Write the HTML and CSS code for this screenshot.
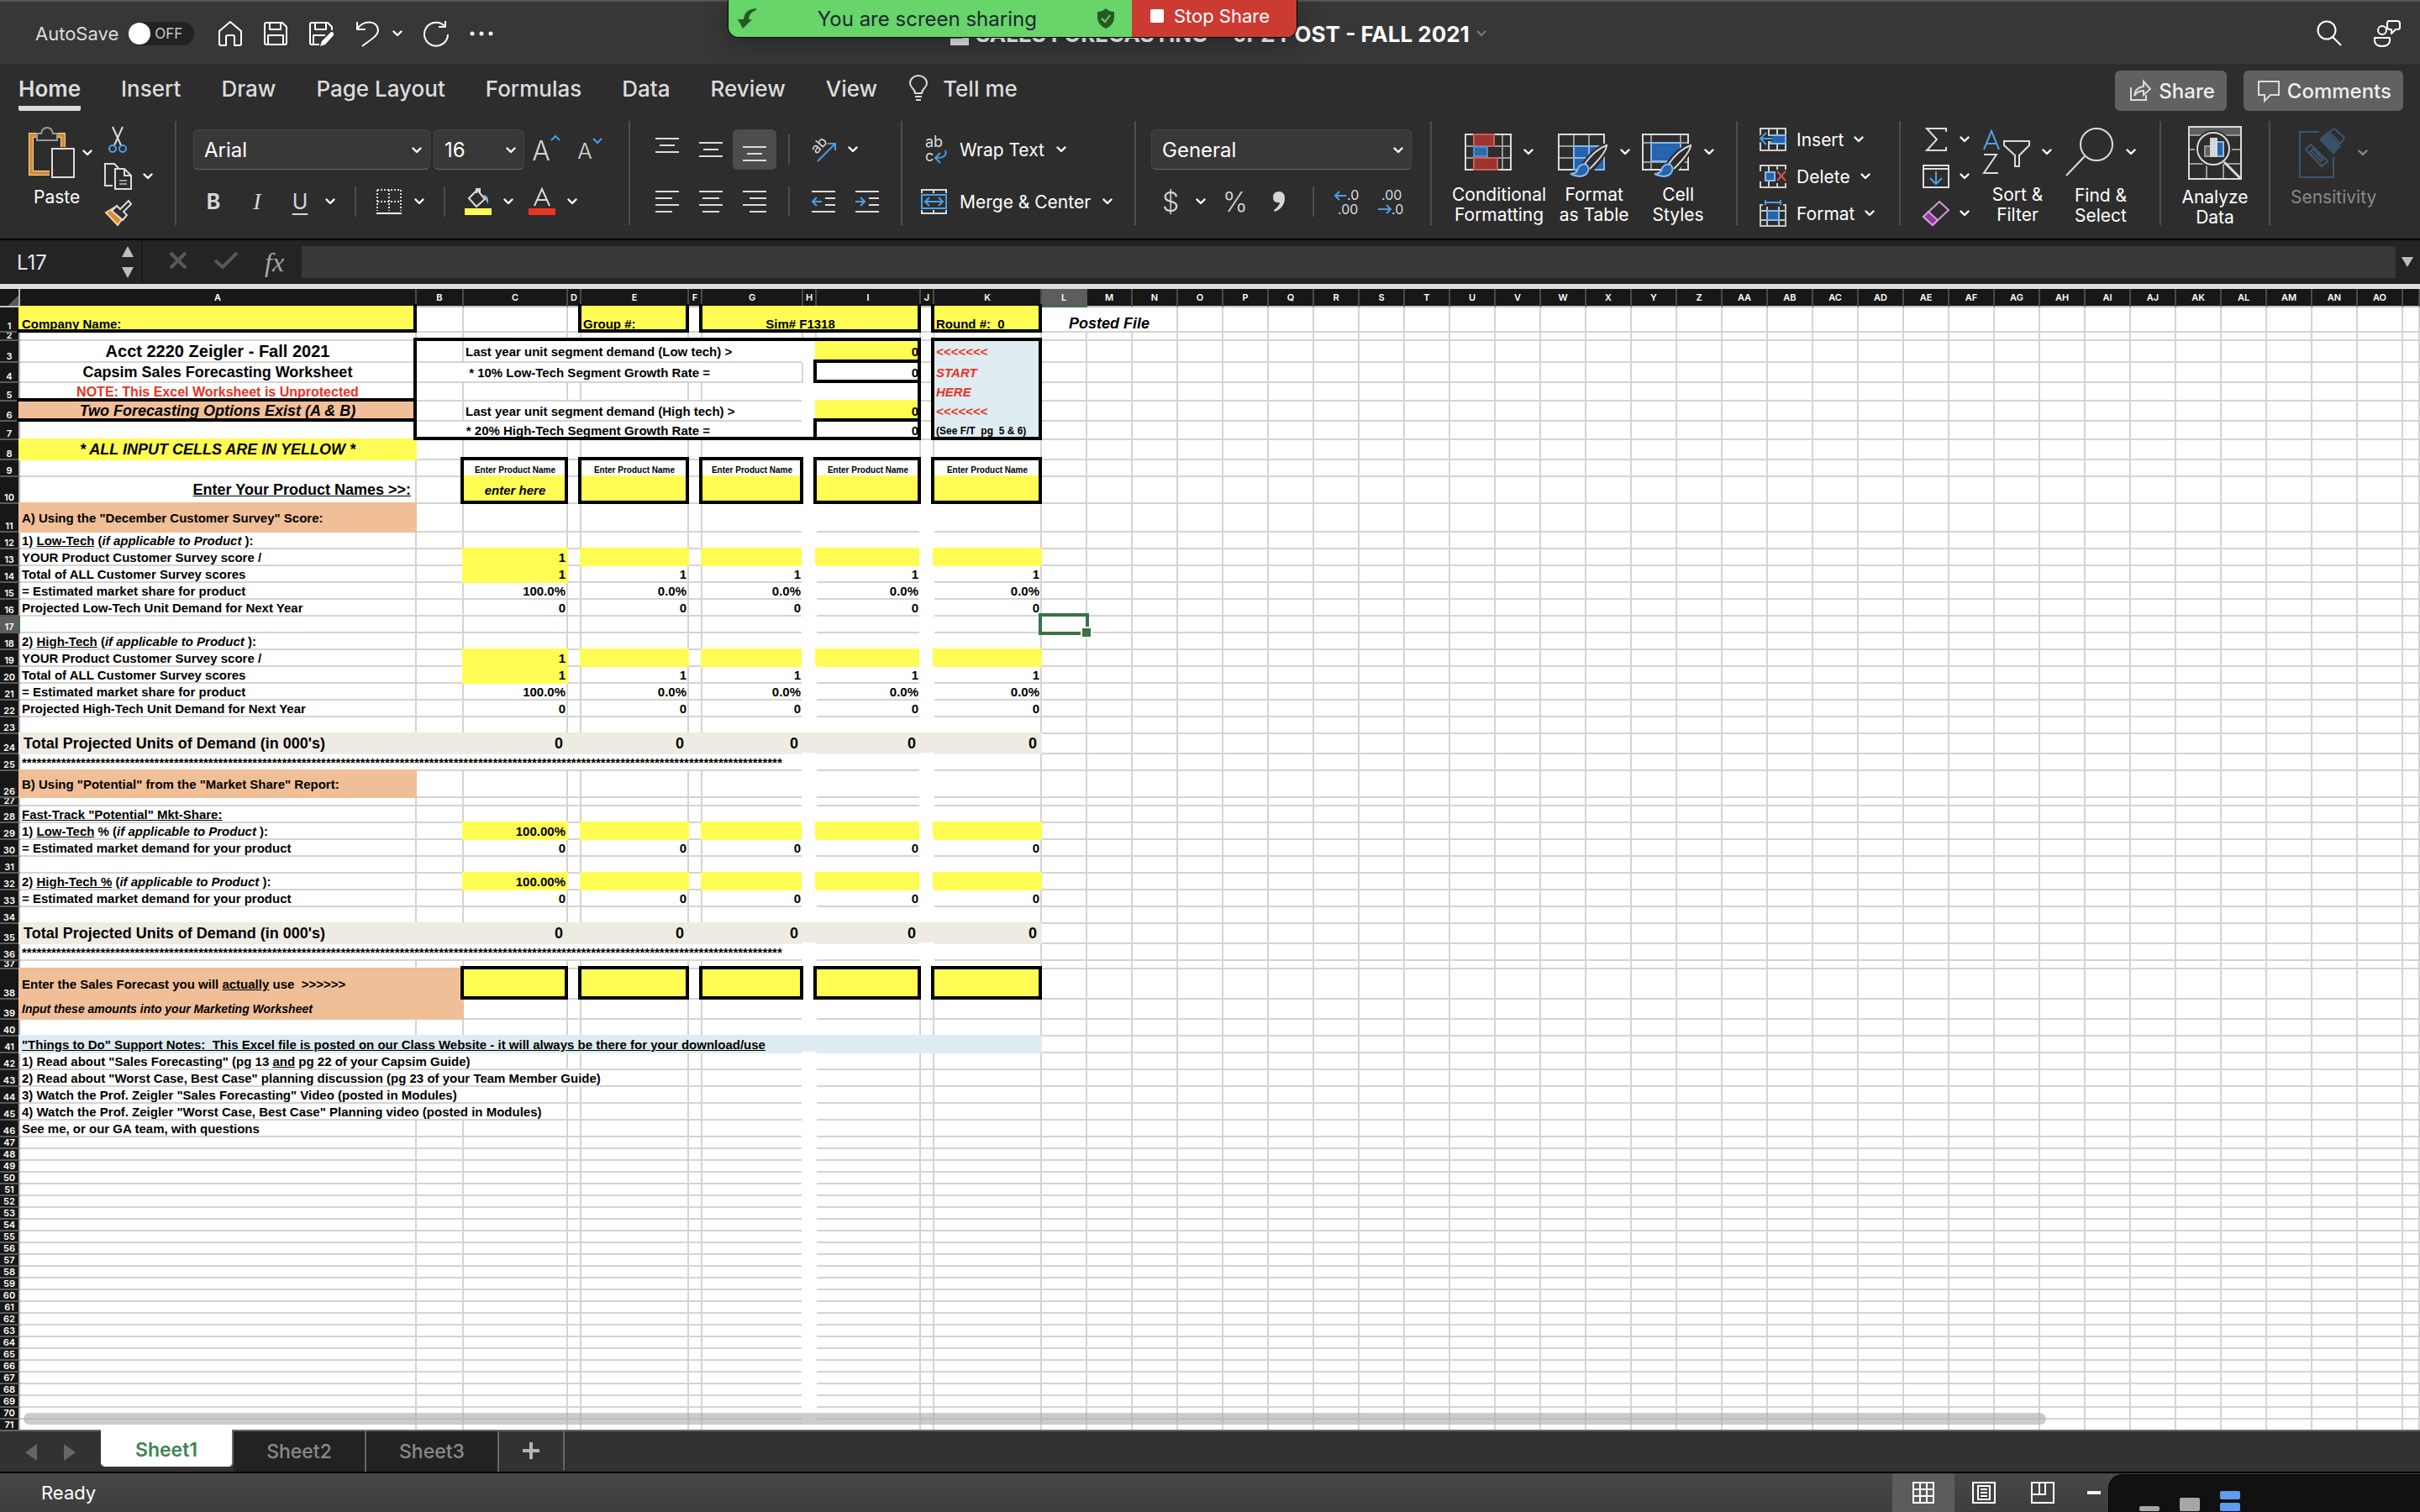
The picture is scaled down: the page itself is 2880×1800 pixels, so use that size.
FILE: index.html
```html
<!DOCTYPE html>
<html lang="en">
<head>
<meta charset="UTF-8">
<meta name="viewport" content="width=device-width, initial-scale=1.0">
<title>SALES FORECASTING - JPZ POST - FALL 2021</title>
<link rel="stylesheet" href="styles.css">
</head>
<body>

<svg class="defs" aria-hidden="true">
  <symbol id="chev" viewBox="0 0 12 8"><path d="M1.5 1.5 L6 6 L10.500 1.5" fill="none" stroke="currentColor" stroke-width="2.400" stroke-linecap="round" stroke-linejoin="round"/></symbol>
  <symbol id="brush" viewBox="0 0 46 42"><path d="M17 25 Q30 6 44 2 Q44 10 25 32 Z" fill="#2d2d2d" stroke="#2d2d2d" stroke-width="6"/><path d="M1 36 Q9 36 10 29 Q14 23 20 25 Q25 30 20 36 Q13 42 1 36 Z" fill="#2564ae" stroke="#8ab8ea" stroke-width="2"/><path d="M18 24 Q30 7 44 2 Q44 10 24 30" fill="none" stroke="#d6d6d6" stroke-width="2"/></symbol>
</svg>

<header class="titlebar">
  <div class="title-left">
    <label class="autosave" for="autosave">AutoSave</label>
    <span class="switch"><input type="checkbox" id="autosave"><span class="knob"></span><span class="off">OFF</span></span>
    <button class="tb" aria-label="Home"><svg width="30" height="32" viewBox="0 0 30 32"><path d="M2 13 L15 2 L28 13 V28 Q28 30 26 30 H20 V20 Q20 18 18 18 H12 Q10 18 10 20 V30 H4 Q2 30 2 28 Z"/></svg></button>
    <button class="tb" aria-label="Save"><svg width="30" height="32" viewBox="0 0 30 32"><path d="M4 3 H23 L28 8 V27 Q28 29 26 29 H4 Q2 29 2 27 V5 Q2 3 4 3 Z M8 3 V11 H21 V3 M6 29 V18 H24 V29"/></svg></button>
    <button class="tb" aria-label="Save as"><svg width="32" height="32" viewBox="0 0 32 32"><path d="M13 29 H4 Q2 29 2 27 V5 Q2 3 4 3 H23 L28 8 V12 M8 3 V11 H21 V3 M6 29 V18 H20"/><path d="M14 31 L16 25 L27 14 Q31 14 30 18 L20 29 Z" fill="#fff" stroke="none"/></svg></button>
    <button class="tb" aria-label="Undo"><svg width="30" height="34" viewBox="0 0 30 34"><path d="M2 3 V12 H12 M2 12 C8 1 26 0 27 13 C27 20 18 24 8 32"/></svg><svg class="chev"><use href="#chev"/></svg></button>
    <button class="tb" aria-label="Redo"><svg width="32" height="34" viewBox="0 0 32 34"><path d="M27 2 V9 H19 M27 9 A14 14 0 1 0 30 18"/></svg></button>
    <button class="tb" aria-label="More"><svg width="28" height="32" viewBox="0 0 28 32"><g fill="#fff" stroke="none"><circle cx="3" cy="16" r="2.500"/><circle cx="14" cy="16" r="2.500"/><circle cx="25" cy="16" r="2.500"/></g></svg></button>
  </div>
  <div class="doc-title">
    <svg width="22" height="28" viewBox="0 0 22 28"><rect width="22" height="28" fill="#e6e6e6"/><rect width="14" height="20" fill="#2f7d46"/></svg>
    <h1>SALES FORECASTING&nbsp; - JPZ POST - FALL 2021</h1>
    <svg class="chev dim"><use href="#chev"/></svg>
  </div>
  <div class="title-right">
    <button class="tb" aria-label="Search"><svg width="32" height="34" viewBox="0 0 32 34"><circle cx="13" cy="13" r="10.500"/><path d="M20 21 L30 31"/></svg></button>
    <button class="tb" aria-label="Collaborate"><svg width="34" height="34" viewBox="0 0 34 34"><circle cx="11" cy="13" r="5"/><path d="M2 22 H20 V26 Q19 32 11 32 Q3 32 2 26 Z M19 2 H29 Q32 2 32 5 V10 Q32 12 29 12 H27 L22 17 V12 H20 Q17 12 17 9 V5 Q17 2 19 2 Z"/></svg></button>
  </div>
</header>

<div class="share-banner">
  <div class="sharing">
    <svg width="26" height="26" viewBox="0 0 26 26"><path d="M24 1 Q10 2 9 14 H2 L8 25 L19 14 H15 Q15 6 24 3 Z" fill="#255a22"/></svg>
    <span>You are screen sharing</span>
    <svg width="22" height="24" viewBox="0 0 22 24"><path d="M11 0 Q15 4 21 4 V12 Q20 20 11 24 Q2 20 1 12 V4 Q7 4 11 0 Z" fill="#255a22"/><path d="M6 12 L10 16 L16 8" fill="none" stroke="#67d569" stroke-width="2"/></svg>
  </div>
  <button class="stop"><span class="square"></span>Stop Share</button>
</div>

<nav class="tabs">
  <a href="#" class="on">Home</a>
  <a href="#">Insert</a>
  <a href="#">Draw</a>
  <a href="#">Page Layout</a>
  <a href="#">Formulas</a>
  <a href="#">Data</a>
  <a href="#">Review</a>
  <a href="#">View</a>
  <a href="#" class="tell"><svg width="22" height="32" viewBox="0 0 22 32"><path d="M7 22 Q7 19 4 16 Q1 13 1 10 A10 9 0 0 1 21 10 Q21 13 18 16 Q15 19 15 22 Z M7 26 H15 M8 30 H14" fill="none" stroke="#dcdcdc" stroke-width="2"/></svg>Tell me</a>
  <span class="grow"></span>
  <button class="pill"><svg width="26" height="26" viewBox="0 0 26 26"><path d="M2 9 V24 H20 V18 M6 19 Q7 9 17 8 V2 L25 11 L17 18 V13 Q10 13 6 19 Z"/></svg>Share</button>
  <button class="pill"><svg width="26" height="26" viewBox="0 0 26 26"><path d="M1 2 H25 V18 H15 L8 25 V18 H1 Z"/></svg>Comments</button>
</nav>

<div class="tools">
  <div class="group g-clip">
    <button class="big"><span class="pic"><svg width="56" height="62" viewBox="0 0 56 62"><path d="M12 10 H3 V55 H25 M34 10 H41 V24" fill="none" stroke="#f0d7a0" stroke-width="6"/><path d="M12 10 H3 V55 H25 M34 10 H41 V24" fill="none" stroke="#d98a33" stroke-width="4"/><path d="M10 16 V8 H15 Q16 1 22 1 Q28 1 29 8 H34 V16 Z" fill="#2d2d2d" stroke="#9a9a9a" stroke-width="2"/><rect x="28" y="26" width="26" height="34" fill="#2d2d2d" stroke="#dcdcdc" stroke-width="2"/></svg><svg class="chev"><use href="#chev"/></svg></span><span class="cap">Paste</span></button>
    <div class="stack">
      <button class="mini" aria-label="Cut"><svg width="32" height="32" viewBox="0 0 32 32"><path d="M10 1 L20 23 M22 1 L12 23" fill="none" stroke="#dcdcdc" stroke-width="2"/><circle cx="10" cy="27" r="4" fill="none" stroke="#4f9ee3" stroke-width="2"/><circle cx="22" cy="27" r="4" fill="none" stroke="#4f9ee3" stroke-width="2"/></svg></button>
      <button class="mini" aria-label="Copy"><svg width="34" height="32" viewBox="0 0 34 32"><path d="M10 27 H1 V1 H12 L17 6 M13 7 H24 L32 15 V31 H13 Z M24 7 V15 H32" fill="none" stroke="#dcdcdc" stroke-width="2"/><path d="M18 21 H27 M18 25 H27" stroke="#9a9a9a" stroke-width="2"/></svg><svg class="chev"><use href="#chev"/></svg></button>
      <button class="mini" aria-label="Format painter"><svg width="34" height="32" viewBox="0 0 34 32"><path d="M2 15 L14 8 L24 19 L16 30 Z" fill="#d98a33" stroke="#f0d7a0" stroke-width="2"/><path d="M9 13 L15 7 L19 11 L29 1 L32 5 L23 14 L27 18 L22 24 Z" fill="#2d2d2d" stroke="#dcdcdc" stroke-width="2"/></svg></button>
    </div>
  </div>

  <div class="group g-font">
    <div class="row">
      <span class="drop font"><select aria-label="Font"><option>Arial</option></select><svg class="chev"><use href="#chev"/></svg></span>
      <span class="drop size"><select aria-label="Font size"><option>16</option></select><svg class="chev"><use href="#chev"/></svg></span>
      <button class="tool letter big-a">A<svg width="12" height="8" viewBox="0 0 12 8"><path d="M1 7 L6 2 L11 7"/></svg></button>
      <button class="tool letter">A<svg width="12" height="8" viewBox="0 0 12 8"><path d="M1 1 L6 6 L11 1"/></svg></button>
    </div>
    <div class="row">
      <button class="tool b">B</button>
      <button class="tool i">I</button>
      <button class="split"><span class="ico u">U</span><svg class="chev"><use href="#chev"/></svg></button>
      <span class="sep"></span>
      <button class="split" aria-label="Borders"><span class="ico"><svg width="30" height="30" viewBox="0 0 30 30"><path d="M1 1 H29 M1 15 H29 M1 1 V26 M15 1 V26 M29 1 V26" fill="none" stroke="#dcdcdc" stroke-width="2" stroke-dasharray="2 2"/><path d="M0 29 H30" stroke="#fff" stroke-width="2"/></svg></span><svg class="chev"><use href="#chev"/></svg></button>
      <span class="sep"></span>
      <button class="split" aria-label="Fill color"><span class="ico"><svg width="32" height="32" viewBox="0 0 32 32"><path d="M5 12 L15 2 L24 13 L14 22 Z M14 6 V1 H18 V5" fill="none" stroke="#dcdcdc" stroke-width="2"/><path d="M22 8 Q29 8 28 19 Q25 14 22 8" fill="#8ab8ea"/><rect y="24" width="32" height="8" fill="#fffd54"/></svg></span><svg class="chev"><use href="#chev"/></svg></button>
      <button class="split" aria-label="Font color"><span class="ico"><svg width="32" height="32" viewBox="0 0 32 32"><path d="M7 21 L16 1 L25 21 M10 14 H22" fill="none" stroke="#dcdcdc" stroke-width="2"/><rect y="24" width="32" height="8" fill="#eb3323"/></svg></span><svg class="chev"><use href="#chev"/></svg></button>
    </div>
  </div>

  <div class="group g-align">
    <div class="row">
      <button class="tool ln" aria-label="Top align"><svg width="28" height="28" viewBox="0 0 28 28"><path d="M0 1 H28 M5 9 H23 M0 17 H28"/></svg></button>
      <button class="tool ln" aria-label="Middle align"><svg width="28" height="28" viewBox="0 0 28 28"><path d="M0 6 H28 M5 14 H23 M0 22 H28"/></svg></button>
      <button class="tool ln on" aria-label="Bottom align"><svg width="28" height="28" viewBox="0 0 28 28"><path d="M0 11 H28 M5 19 H23 M0 27 H28"/></svg></button>
      <span class="sep"></span>
      <button class="split" aria-label="Orientation"><span class="ico"><svg width="32" height="32" viewBox="0 0 32 32"><text x="0" y="0" transform="translate(9 22) rotate(-48)" font-size="17" fill="#dcdcdc">ab</text><path d="M10 30 L31 9 M22 9 H31 V17" fill="none" stroke="#4f9ee3" stroke-width="2"/></svg></span><svg class="chev"><use href="#chev"/></svg></button>
    </div>
    <div class="row">
      <button class="tool ln" aria-label="Align left"><svg width="28" height="28" viewBox="0 0 28 28"><path d="M0 2 H28 M0 10 H20 M0 18 H28 M0 26 H20"/></svg></button>
      <button class="tool ln" aria-label="Center"><svg width="28" height="28" viewBox="0 0 28 28"><path d="M0 2 H28 M4 10 H24 M0 18 H28 M4 26 H24"/></svg></button>
      <button class="tool ln" aria-label="Align right"><svg width="28" height="28" viewBox="0 0 28 28"><path d="M0 2 H28 M8 10 H28 M0 18 H28 M8 26 H28"/></svg></button>
      <span class="sep"></span>
      <button class="tool ln" aria-label="Decrease indent"><svg width="28" height="28" viewBox="0 0 28 28"><path d="M0 2 H28 M16 10 H28 M16 18 H28 M0 26 H28"/><path class="blue" d="M12 14 H1 M6 9 L1 14 L6 19"/></svg></button>
      <button class="tool ln" aria-label="Increase indent"><svg width="28" height="28" viewBox="0 0 28 28"><path d="M0 2 H28 M16 10 H28 M16 18 H28 M0 26 H28"/><path class="blue" d="M0 14 H11 M6 9 L11 14 L6 19"/></svg></button>
    </div>
  </div>

  <div class="group g-wrap">
    <div class="row">
      <button class="text-btn"><svg width="32" height="34" viewBox="0 0 32 34"><text x="5" y="14" font-size="18" fill="#dcdcdc">ab</text><text x="5" y="31" font-size="18" fill="#dcdcdc">c</text><path d="M29 18 Q32 27 18 27 M23 21 L17 27 L23 33" fill="none" stroke="#4f9ee3" stroke-width="2"/></svg><span>Wrap Text</span><svg class="chev"><use href="#chev"/></svg></button>
    </div>
    <div class="row">
      <button class="text-btn"><svg width="32" height="32" viewBox="0 0 32 32"><path d="M1 6 V2 H30 V6 M1 26 V30 H30 V26 M15 2 V6 M15 26 V30" fill="none" stroke="#dcdcdc" stroke-width="2"/><path d="M1 8 H30 V24 H1 Z M6 16 H25 M10 11 L5 16 L10 21 M21 11 L26 16 L21 21" fill="none" stroke="#4f9ee3" stroke-width="2"/></svg><span>Merge &amp; Center</span><svg class="chev"><use href="#chev"/></svg></button>
    </div>
  </div>

  <div class="group g-num">
    <div class="row">
      <span class="drop num"><select aria-label="Number format"><option>General</option></select><svg class="chev"><use href="#chev"/></svg></span>
    </div>
    <div class="row">
      <button class="split"><span class="ico sym">$</span><svg class="chev"><use href="#chev"/></svg></button>
      <button class="tool sym">%</button>
      <button class="tool" aria-label="Comma style"><svg width="18" height="26" viewBox="0 0 18 26"><path d="M9 1 Q16 1 16 9 Q16 20 4 25 L3 23 Q10 18 10 14 Q2 15 2 8 Q2 1 9 1 Z" fill="#d6d6d6"/></svg></button>
      <span class="sep"></span>
      <button class="tool" aria-label="Increase decimal"><svg width="32" height="34" viewBox="0 0 32 34"><text x="15" y="15" font-size="16" fill="#dcdcdc">.0</text><text x="4" y="32" font-size="16" fill="#dcdcdc">.00</text><path d="M14 10 H1 M6 5 L1 10 L6 15" fill="none" stroke="#4f9ee3" stroke-width="2"/></svg></button>
      <button class="tool" aria-label="Decrease decimal"><svg width="32" height="34" viewBox="0 0 32 34"><text x="4" y="15" font-size="16" fill="#dcdcdc">.00</text><text x="16" y="32" font-size="16" fill="#dcdcdc">.0</text><path d="M0 26 H15 M10 21 L15 26 L10 31" fill="none" stroke="#4f9ee3" stroke-width="2"/></svg></button>
    </div>
  </div>

  <div class="group g-style">
    <button class="big"><span class="pic"><svg width="56" height="44" viewBox="0 0 56 44"><path d="M1 15 H55 M1 29 H55 M45 1 V43 M11 1 V43" stroke="#9a9a9a" stroke-width="2"/><rect x="1" y="1" width="54" height="42" fill="none" stroke="#dcdcdc" stroke-width="2"/><rect x="11" y="1" width="24" height="14" fill="#9c3430" stroke="#cf5c57" stroke-width="2"/><rect x="11" y="16" width="16" height="11" fill="#2f6aa5" stroke="#4a90c8" stroke-width="2"/><rect x="11" y="29" width="28" height="14" fill="#9c3430" stroke="#cf5c57" stroke-width="2"/></svg><svg class="chev"><use href="#chev"/></svg></span><span class="cap">Conditional<br>Formatting</span></button>
    <button class="big"><span class="pic"><svg width="60" height="56" viewBox="0 0 60 56"><path d="M1 21 H56 M1 35 H56 M19 7 V49 M37 7 V49" stroke="#9a9a9a" stroke-width="2"/><rect x="1" y="7" width="54" height="42" fill="none" stroke="#dcdcdc" stroke-width="2"/><path d="M19 21 H55 V49 H19 Z M37 21 V49 M19 35 H55" fill="#2564ae" stroke="#8ab8ea" stroke-width="2"/><use href="#brush" x="14" y="18" width="46" height="42"/></svg><svg class="chev"><use href="#chev"/></svg></span><span class="cap">Format<br>as Table</span></button>
    <button class="big"><span class="pic"><svg width="60" height="56" viewBox="0 0 60 56"><path d="M1 17 H56 M1 40 H56 M11 7 V49 M46 7 V49" stroke="#9a9a9a" stroke-width="2"/><rect x="1" y="7" width="54" height="42" fill="none" stroke="#dcdcdc" stroke-width="2"/><rect x="11" y="17" width="35" height="22" fill="#2564ae" stroke="#8ab8ea" stroke-width="2"/><use href="#brush" x="14" y="18" width="46" height="42"/></svg><svg class="chev"><use href="#chev"/></svg></span><span class="cap">Cell<br>Styles</span></button>
  </div>

  <div class="group g-cells">
    <div class="stack">
      <button class="mini"><svg width="32" height="28" viewBox="0 0 32 28"><path d="M1 1 H31 V27 H1 Z M11 1 V27 M21 1 V27" fill="none" stroke="#d0d0d0" stroke-width="2"/><rect x="13" y="9" width="18" height="10" fill="#2564ae" stroke="#8ab8ea" stroke-width="2"/><path d="M15 13 H2 M8 6 L1 13 L8 20" fill="none" stroke="#2d2d2d" stroke-width="6"/><path d="M15 13 H2 M8 6 L1 13 L8 20" fill="none" stroke="#4f9ee3" stroke-width="2"/></svg><span>Insert</span><svg class="chev"><use href="#chev"/></svg></button>
      <button class="mini"><svg width="32" height="28" viewBox="0 0 32 28"><path d="M1 8 V1 H31 V6 M1 20 V27 H31 V22 M11 1 V8 M21 1 V6 M11 20 V27 M21 22 V27" fill="none" stroke="#d0d0d0" stroke-width="2"/><rect x="7" y="9" width="11" height="10" fill="#2564ae" stroke="#8ab8ea" stroke-width="2"/><path d="M21 8 L31 19 M31 8 L21 19" stroke="#d9534f" stroke-width="2"/></svg><span>Delete</span><svg class="chev"><use href="#chev"/></svg></button>
      <button class="mini"><svg width="32" height="32" viewBox="0 0 32 32"><path d="M4 6 H1 V31 H31 V6 H28 M9 8 V31 M23 8 V31 M1 13 H31 M1 24 H31" fill="none" stroke="#c4c4c4" stroke-width="2"/><rect x="9" y="13" width="14" height="11" fill="#2564ae" stroke="#8ab8ea" stroke-width="2"/><path d="M7 3 H25 M7 0 V6 M25 0 V6" stroke="#4f9ee3" stroke-width="2"/></svg><span>Format</span><svg class="chev"><use href="#chev"/></svg></button>
    </div>
  </div>

  <div class="group g-edit">
    <div class="stack">
      <button class="mini" aria-label="AutoSum"><svg width="32" height="28" viewBox="0 0 32 28"><path d="M28 5 V1 H5 L17 14 L5 27 H28 V23" fill="none" stroke="#dcdcdc" stroke-width="2"/></svg><svg class="chev"><use href="#chev"/></svg></button>
      <button class="mini" aria-label="Fill"><svg width="32" height="28" viewBox="0 0 32 28"><path d="M1 1 H31 V27 H1 Z M1 5 H31" fill="none" stroke="#dcdcdc" stroke-width="2"/><path d="M16 8 V23 M9 16 L16 23 L23 16" fill="none" stroke="#4f9ee3" stroke-width="2"/></svg><svg class="chev"><use href="#chev"/></svg></button>
      <button class="mini" aria-label="Clear"><svg width="32" height="30" viewBox="0 0 32 30"><path d="M20 1 L31 11 L12 29 L1 19 Z" fill="none" stroke="#d69bdc" stroke-width="2"/><path d="M7 13 L18 23 L12 29 L1 19 Z" fill="#8f3a9c" stroke="#d69bdc" stroke-width="2"/></svg><svg class="chev"><use href="#chev"/></svg></button>
    </div>
    <button class="big"><span class="pic"><svg width="56" height="56" viewBox="0 0 56 56"><path d="M1 25 L10 3 L19 25 M4 18 H16" fill="none" stroke="#4f9ee3" stroke-width="2"/><path d="M1 31 H16 L1 53 H18" fill="none" stroke="#dcdcdc" stroke-width="2"/><path d="M25 15 H55 V20 L43 32 V45 H38 V32 L25 20 Z" fill="none" stroke="#dcdcdc" stroke-width="2"/></svg><svg class="chev"><use href="#chev"/></svg></span><span class="cap">Sort &amp;<br>Filter</span></button>
    <button class="big"><span class="pic"><svg width="58" height="58" viewBox="0 0 58 58"><circle cx="37" cy="20" r="19" fill="none" stroke="#dcdcdc" stroke-width="2"/><path d="M23 34 L1 57" stroke="#dcdcdc" stroke-width="2"/></svg><svg class="chev"><use href="#chev"/></svg></span><span class="cap">Find &amp;<br>Select</span></button>
  </div>

  <div class="group g-an">
    <button class="big"><span class="pic"><svg width="64" height="64" viewBox="0 0 64 64"><rect x="1" y="1" width="62" height="10" fill="#5f5f5f"/><path d="M1 11 H63 M1 28 H63 M1 45 H63 M22 45 V63 M42 45 V63" stroke="#9a9a9a" stroke-width="2"/><rect x="1" y="1" width="62" height="62" fill="none" stroke="#dcdcdc" stroke-width="2"/><circle cx="30" cy="27" r="22" fill="#2d2d2d"/><circle cx="30" cy="27" r="19" fill="none" stroke="#dcdcdc" stroke-width="2"/><path d="M43 43 L63 63" stroke="#dcdcdc" stroke-width="3"/><rect x="20" y="24" width="7" height="12" fill="#5f5f5f" stroke="#9a9a9a" stroke-width="2"/><rect x="34" y="19" width="8" height="17" fill="#2564ae" stroke="#8ab8ea" stroke-width="2"/><rect x="26" y="14" width="9" height="23" fill="#d6d6d6"/></svg></span><span class="cap">Analyze<br>Data</span></button>
  </div>

  <div class="group g-sens">
    <button class="big" disabled><span class="pic"><svg width="56" height="60" viewBox="0 0 56 60"><path d="M24 5 H1 V59 H41 V35" fill="none" stroke="#3d566d" stroke-width="2"/><path d="M8 26 L14 20 L34 40 L27 46 Z M14 28 L17 25 L28 38 L26 40 Z M36 5 L42 1 L54 12 L49 19 Z" fill="none" stroke="#3d566d" stroke-width="2"/><path d="M24 14 L34 5 L50 22 L41 32 Z" fill="#3a5268"/></svg><svg class="chev"><use href="#chev"/></svg></span><span class="cap">Sensitivity</span></button>
  </div>
</div>

<div class="formula-bar">
  <div class="name-box">
    <input type="text" value="L17" aria-label="Name box">
    <svg width="16" height="38" viewBox="0 0 16 38"><path d="M8 0 L15 13 H1 Z M1 25 H15 L8 38 Z" fill="#bdbdbd"/></svg>
  </div>
  <button aria-label="Cancel"><svg width="22" height="22" viewBox="0 0 22 22"><path d="M2 2 L20 20 M20 2 L2 20" stroke="#585858" stroke-width="4"/></svg></button>
  <button aria-label="Enter"><svg width="30" height="22" viewBox="0 0 30 22"><path d="M2 11 L11 19 L28 2" fill="none" stroke="#585858" stroke-width="4"/></svg></button>
  <button class="fx">fx</button>
  <input class="formula" type="text" aria-label="Formula">
  <span class="expand"></span>
</div>

<main class="sheet">
  <table id="grid"></table>
  <div class="scrollbar"></div>
</main>

<footer class="sheet-tabs">
  <div class="arrows">
    <button aria-label="Previous sheet"><svg width="14" height="20" viewBox="0 0 14 20"><path d="M14 0 V20 L0 10 Z" fill="#666"/></svg></button>
    <button aria-label="Next sheet"><svg width="14" height="20" viewBox="0 0 14 20"><path d="M0 0 V20 L14 10 Z" fill="#666"/></svg></button>
  </div>
  <button class="tab on">Sheet1</button>
  <button class="tab">Sheet2</button>
  <button class="tab">Sheet3</button>
  <button class="add" aria-label="Add sheet"><svg width="20" height="20" viewBox="0 0 20 20"><path d="M10 0 V20 M0 10 H20" stroke="#b4b4b4" stroke-width="4"/></svg></button>
</footer>

<div class="status">
  <span class="ready">Ready</span>
  <button class="view on" aria-label="Normal view"><svg width="26" height="26" viewBox="0 0 26 26"><path d="M1 1 H25 V25 H1 Z M9 1 V25 M17 1 V25 M1 9 H25 M1 17 H25"/></svg></button>
  <button class="view" aria-label="Page layout view"><svg width="28" height="26" viewBox="0 0 28 26"><path d="M1 1 H27 V25 H1 Z M7 5 H21 V21 H7 Z M10 9 H18 M10 13 H18 M10 17 H18"/></svg></button>
  <button class="view" aria-label="Page break view"><svg width="28" height="26" viewBox="0 0 28 26"><path d="M1 1 H27 V25 H1 Z M1 15 H17 V1 M10 1 V15"/></svg></button>
  <button class="zoom-out" aria-label="Zoom out"><svg width="16" height="4"><rect width="16" height="4" fill="#f2f2f2"/></svg></button>
</div>

<div class="panel">
  <svg width="122" height="32" viewBox="0 0 122 32"><g fill="#a6a6a6"><rect x="1" y="19" width="24" height="6" rx="2"/><rect x="49" y="9" width="24" height="16" rx="2"/></g><g fill="#5f9bef"><rect x="97" y="1" width="24" height="10" rx="2"/><rect x="97" y="15" width="24" height="10" rx="2"/></g></svg>
</div>

<script src="script.js"></script>
</body>
</html>
```

FILE: styles.css
```css
* {
  box-sizing: border-box;
}
body {
  margin: 0;
  height: 100vh;
  display: flex;
  flex-direction: column;
  overflow: hidden;
  background: #2d2d2d;
  color: #fff;
  font-family: Inter, "Liberation Sans", sans-serif;
  font-size: 22px;
}
button, input, select {
  font: inherit;
  color: inherit;
  background: none;
  border: 0;
  padding: 0;
  margin: 0;
}
svg {
  flex: none;
  overflow: visible;
}
.defs {
  position: absolute;
  width: 0;
  height: 0;
}
.chev {
  width: 12px;
  height: 8px;
}
.grow {
  flex: 1;
}

/* title bar */
.titlebar {
  display: flex;
  align-items: center;
  flex: none;
  height: 76px;
  padding-top: 2px;
  border-top: 2px solid #565656;
  background: #373737;
}
.title-left, .title-right {
  flex: 1;
  display: flex;
  align-items: center;
}
.title-left {
  padding-left: 42px;
  gap: 24px;
}
.title-right {
  justify-content: flex-end;
  gap: 36px;
  padding-right: 22px;
}
.autosave {
  margin-right: -12px;
  color: #dcdcdc;
}
.switch {
  position: relative;
  display: flex;
  align-items: center;
  justify-content: flex-end;
  width: 78px;
  height: 28px;
  margin-right: 4px;
  padding-right: 14px;
  border-radius: 14px;
  background: #222;
  font-size: 17px;
  color: #c8c8c8;
}
.switch input {
  position: absolute;
  inset: 0;
  width: 100%;
  opacity: 0;
}
.knob {
  position: absolute;
  left: 0;
  top: 1px;
  width: 26px;
  height: 26px;
  border-radius: 50%;
  background: #fff;
}
.tb {
  display: flex;
  align-items: center;
  gap: 14px;
}
.tb svg:not(.chev) {
  fill: none;
  stroke: #fff;
  stroke-width: 2px;
  stroke-linejoin: round;
}
.doc-title {
  display: flex;
  align-items: center;
  gap: 8px;
}
.doc-title h1 {
  margin: 0;
  font-size: 26px;
  font-weight: 700;
  white-space: nowrap;
}
.dim {
  color: #777;
}
.share-banner {
  position: absolute;
  top: 0;
  left: 30.100%;
  width: 676px;
  height: 44px;
  display: flex;
  overflow: hidden;
  border-radius: 0 0 12px 12px;
  box-shadow: 0 0 0 1px #000, 0 8px 30px rgba(0, 0, 0, .3);
}
.sharing {
  flex: 1;
  display: flex;
  align-items: center;
  justify-content: space-between;
  padding: 0 20px 0 9px;
  background: #67d569;
  color: #1c2733;
  font-size: 24px;
}
.stop {
  display: flex;
  align-items: center;
  gap: 12px;
  width: 196px;
  padding: 0 22px 6px;
  background: #cc3b32;
  color: #fff;
}
.square {
  width: 16px;
  height: 16px;
  border-radius: 2px;
  background: #fff;
}

/* ribbon tabs */
.tabs {
  display: flex;
  flex: none;
  gap: 48px;
  height: 68px;
  padding: 8px 20px 0 22px;
}
.tabs a {
  display: flex;
  align-items: center;
  height: 48px;
  padding-bottom: 6px;
  color: #dcdcdc;
  font-size: 26px;
  font-weight: 500;
  text-decoration: none;
}
.tabs a.on {
  padding-bottom: 0;
  border-bottom: 6px solid #dcdcdc;
  border-radius: 2px;
  font-weight: 600;
}
.tabs .tell {
  gap: 18px;
  margin-left: -10px;
}
.pill {
  display: flex;
  align-items: center;
  gap: 9px;
  height: 48px;
  padding: 0 14px 0 17px;
  border-radius: 6px;
  background: #616161;
  color: #eee;
  font-size: 24px;
  font-weight: 500;
}
.pill + .pill {
  margin-left: -28px;
}
.pill svg {
  fill: none;
  stroke: #dcdcdc;
  stroke-width: 2px;
}

/* ribbon tools */
.tools {
  display: flex;
  flex: none;
  height: 142px;
  padding-bottom: 16px;
  border-bottom: 2px solid #000;
}
.group {
  display: flex;
  border-right: 2px solid #4d4d4d;
}
.g-clip {
  width: 210px;
  padding-left: 34px;
  gap: 14px;
}
.g-clip .big {
  align-items: flex-start;
}
.g-clip .pic {
  gap: 8px;
}
.g-clip .cap {
  padding-left: 6px;
}
.g-font, .g-align, .g-wrap, .g-num {
  flex-direction: column;
  gap: 14px;
  padding-top: 10px;
}
.g-font {
  width: 540px;
  padding-left: 18px;
}
.g-align {
  width: 324px;
  padding-left: 18px;
}
.g-wrap {
  width: 278px;
  padding-left: 22px;
}
.g-num {
  width: 352px;
  padding-left: 16px;
}
.g-style {
  width: 364px;
  padding-left: 24px;
  gap: 14px;
}
.g-cells {
  width: 194px;
  padding-left: 26px;
}
.g-edit {
  width: 310px;
  padding-left: 26px;
  gap: 16px;
}
.g-an {
  width: 130px;
  justify-content: center;
}
.g-sens {
  flex: 1;
  padding-left: 24px;
  border: 0;
}
.row {
  display: flex;
  align-items: center;
  height: 48px;
}
.drop {
  position: relative;
  height: 48px;
  margin-left: 2px;
  border: 1px solid #464646;
  border-bottom-color: #686868;
  border-radius: 6px;
  background: #383838;
}
.drop select {
  width: 100%;
  height: 100%;
  padding-left: 12px;
  appearance: none;
  font-size: 24px;
}
.drop .chev {
  position: absolute;
  right: 9px;
  top: 20px;
}
.font {
  width: 282px;
}
.size {
  width: 108px;
  margin-left: 4px;
}
.num {
  width: 310px;
}
.tool {
  display: flex;
  align-items: center;
  justify-content: center;
  width: 52px;
  height: 48px;
  color: #d6d6d6;
}
.tool.on {
  border-radius: 6px;
  background: #4d4d4d;
}
.letter {
  align-items: flex-start;
  padding-top: 10px;
  font-size: 26px;
  font-weight: 300;
}
.big-a {
  padding-top: 6px;
  font-size: 32px;
}
.letter svg, .blue {
  fill: none;
  stroke: #4f9ee3;
  stroke-width: 2px;
}
.b {
  font-size: 25px;
  font-weight: 700;
}
.i {
  font-family: "Liberation Serif", serif;
  font-size: 28px;
  font-style: italic;
}
.u {
  font-size: 25px;
  text-decoration: underline;
  text-underline-offset: 5px;
}
.sym {
  font-size: 32px;
  font-weight: 300;
}
.split {
  display: flex;
  align-items: center;
  gap: 14px;
  padding: 0 9px;
}
.ico {
  display: flex;
  justify-content: center;
  width: 32px;
  color: #d6d6d6;
}
.u.ico {
  display: block;
}
.sep {
  width: 2px;
  height: 36px;
  margin: 0 14px;
  background: #4d4d4d;
}
.ln svg {
  stroke: #dcdcdc;
  stroke-width: 2px;
}
.ln .blue {
  stroke: #4f9ee3;
}
.text-btn {
  display: flex;
  align-items: center;
  gap: 14px;
  font-size: 21px;
}
.big {
  display: flex;
  flex-direction: column;
  align-items: center;
  padding-top: 8px;
}
.big:disabled {
  color: #8a8a8a;
}
.pic {
  display: flex;
  align-items: center;
  gap: 14px;
  height: 60px;
  margin-bottom: 11px;
}
.cap {
  font-size: 21px;
  line-height: 24px;
  white-space: nowrap;
}
.stack {
  display: flex;
  flex-direction: column;
  gap: 16px;
  padding-top: 8px;
}
.mini {
  display: flex;
  align-items: center;
  gap: 12px;
  height: 28px;
  font-size: 21px;
}

/* formula bar */
.formula-bar {
  display: flex;
  align-items: center;
  flex: none;
  height: 58px;
  border-bottom: 6px solid #dedede;
  background: #242424;
  gap: 31px;
}
.name-box {
  display: flex;
  align-items: center;
  justify-content: space-between;
  width: 170px;
  height: 52px;
  padding: 0 8px 0 20px;
  border-right: 2px solid #1a1a1a;
}
.name-box input {
  width: 100px;
  font-size: 24px;
  color: #e6e6e6;
}
.fx {
  color: #a8a8a8;
  font-family: "Liberation Serif", serif;
  font-size: 32px;
  font-style: italic;
}
.formula {
  flex: 1;
  height: 38px;
  margin-left: -10px;
  background: #383838;
}
.expand {
  margin: 0 8px 0 -24px;
  border: 7px solid transparent;
  border-top: 12px solid #bdbdbd;
  border-bottom: 0;
}

/* worksheet */
.sheet {
  position: relative;
  flex: 1;
  min-height: 0;
  overflow: hidden;
  background: #fff;
  color: #000;
}
table {
  width: 100%;
  table-layout: fixed;
  border-collapse: separate;
  border-spacing: 0;
  font-family: "Liberation Sans", Arial, sans-serif;
  font-size: 15px;
  font-weight: 700;
}
th, td {
  padding: 0;
}
th {
  border-right: 2px solid #4a4a4a;
  background: #171717;
  color: #fff;
  font-family: Inter, sans-serif;
  font-size: 11px;
  font-weight: 600;
}
thead th {
  height: 22px;
  border-bottom: 2px solid #c8c3c8;
}
thead th:first-child {
  border-right-color: #b5b0b5;
  background: linear-gradient(135deg, #171717 70%, #5a5a5a 70%);
}
thead .cur {
  border-bottom-color: #3a7246;
  border-right-color: #5d5d5d;
  background: #5d5d5d;
}
tbody th {
  border-right-color: #b5b0b5;
  border-bottom: 2px solid #5a5a5a;
  vertical-align: bottom;
}
tbody th.cur {
  border-right-color: #3a7246;
  background: #5d5d5d;
}
tbody th div {
  display: flex;
  align-items: flex-end;
  justify-content: center;
  height: 12px;
  line-height: 12px;
}
.short th div {
  height: 8px;
  overflow: hidden;
  align-items: flex-start;
  line-height: 6px;
}
td {
  position: relative;
  border-right: 2px solid #d4d4d4;
  border-bottom: 2px solid #d4d4d4;
  vertical-align: middle;
}
td div {
  height: 18px;
  padding: 0 2px;
  line-height: 19px;
  white-space: pre;
}
.num-cell div {
  padding-right: 1px;
  text-align: right;
}
.f {
  border-color: var(--fill);
  background: var(--fill);
  box-shadow: -2px -2px 0 var(--fill), 0 -2px 0 var(--fill), -2px 0 0 var(--fill);
}
.white { --fill: #fff; }
.yellow { --fill: #fffd54; }
.orange { --fill: #f0bf98; }
.beige { --fill: #eeebe2; }
.blue-fill { --fill: #deecf1; }

/* thick box lines sit over the grid lines */
.box {
  z-index: 1;
}
.box::after {
  content: "";
  position: absolute;
  inset: -4px -2px -2px -4px;
  border: 0 solid #000;
  pointer-events: none;
}
.bt::after { border-top-width: 4px; }
.br::after { border-right-width: 4px; }
.bb::after { border-bottom-width: 4px; }
.bl::after { border-left-width: 4px; }

.center { text-align: center; }
.right div { text-align: right; padding-right: 5px; }
.rate div { text-align: right; padding-right: 109px; }
.low { vertical-align: bottom; }
.s10 div { line-height: 24px; }
.top { vertical-align: top; }
.s10 { font-size: 10px; }
.s12 { font-size: 12px; }
.s14 { font-size: 14px; }
.s16 { font-size: 16px; }
.s18 { font-size: 18px; }
.s20 { font-size: 20px; }
.it { font-style: italic; }
.un { text-decoration: underline; }
.red { color: #eb3323; }
.total div { padding: 0 4px; }

.active::before {
  content: "";
  position: absolute;
  inset: -4px -4px -4px -4px;
  border: 4px solid #3a7246;
  z-index: 1;
}
.active::after {
  content: "";
  position: absolute;
  right: -6px;
  bottom: -6px;
  width: 10px;
  height: 10px;
  background: #3a7246;
  box-shadow: 0 0 0 2px #fff;
  z-index: 2;
}
.scrollbar {
  position: absolute;
  left: 28px;
  right: 445px;
  bottom: 6px;
  height: 14px;
  border-radius: 7px;
  background: rgba(170, 170, 170, .6);
  z-index: 2;
}

/* sheet tabs */
.sheet-tabs {
  display: flex;
  align-items: flex-start;
  flex: none;
  height: 52px;
  border-top: 2px solid #666;
  border-bottom: 2px solid #000;
  background: #323232;
}
.arrows {
  display: flex;
  align-items: center;
  gap: 32px;
  width: 120px;
  height: 50px;
  padding-left: 30px;
}
.arrows button {
  display: flex;
}
.tab {
  width: 158px;
  height: 48px;
  border-right: 2px solid #666;
  background: #222;
  color: #8a8a8a;
  font-size: 23px;
  font-weight: 500;
}
.tab.on {
  height: 44px;
  margin-top: -2px;
  padding-top: 4px;
  border-radius: 0 0 5px 5px;
  background: #fff;
  color: #3f8353;
  font-weight: 600;
}
.add {
  display: flex;
  align-items: center;
  justify-content: center;
  width: 78px;
  height: 46px;
  border-right: 2px solid #666;
}

/* status bar */
.status {
  display: flex;
  align-items: center;
  flex: none;
  height: 46px;
  padding: 0 380px 0 49px;
  background: linear-gradient(#484848, #3d3d3d);
}
.ready {
  flex: 1;
}
.view {
  display: flex;
  align-items: center;
  justify-content: center;
  width: 70px;
  height: 46px;
}
.view.on {
  width: 74px;
  background: #5c5c5c;
}
.view svg {
  fill: none;
  stroke: #fff;
  stroke-width: 2px;
}
.zoom-out {
  display: flex;
  margin-left: 18px;
}
.panel {
  position: absolute;
  right: 0;
  bottom: 0;
  width: 370px;
  height: 44px;
  padding: 18px 0 0 35px;
  border-top-left-radius: 16px;
  background: #111;
  box-shadow: 0 0 0 1px #000;
  overflow: hidden;
}
```

FILE: script.js
```js
var colWidths = { A: 472, B: 56, C: 124, D: 16, E: 128, F: 16, G: 120, H: 16, I: 124, J: 16, K: 128 };
var cols = [];
for (var i = 0; i < 42; i++) {
  cols.push(i < 26 ? String.fromCharCode(65 + i) : "A" + String.fromCharCode(39 + i));
}

var rowHeights = [30, 10, 26, 24, 22, 24, 22, 24, 20, 32, 34, 20, 20, 20, 20, 20, 20, 20, 20, 20, 20, 20, 20,
  24, 20, 32, 10, 20, 20, 20, 20, 20, 20, 20, 24, 20, 10, 36, 24, 20, 20, 20, 20, 20, 20, 20];
while (rowHeights.length < 71) rowHeights.push(14);

// cell id -> [text, classes, colspan]
var cells = {};
function put(id, text, cls, span) {
  cells[id] = [text, cls || "", span || 1];
}

var products = ["C", "E", "G", "I", "K"];
var BOX = "box bt br bb bl ";
var Y = "f yellow ";

put("A1", "Company Name:", Y + "box br bb low");
put("E1", "Group #:", Y + "box bl br bb low");
put("G1", "Sim# F1318 _ _", Y + "box bl br bb low center", 3);
put("K1", "Round #:  0", Y + "box bl br bb low");
put("L1", "Posted File", "low center it s18", 3);

put("A3", "Acct 2220 Zeigler - Fall 2021", "center s20");
put("A4", "Capsim Sales Forecasting Worksheet", "center s18");
put("A5", "NOTE: This Excel Worksheet is Unprotected", "center red box bb s16");
put("A6", "Two Forecasting Options Exist (A &amp; B)", "f orange center it box bt bb s18");
put("A8", "* ALL INPUT CELLS ARE IN YELLOW *", Y + "center it s18");

put("B3", "", "box bl bt");
put("C3", "Last year unit segment demand (Low tech) &gt;", "box bt", 5);
put("H3", "", "f white box bt");
put("I3", "0", Y + "num-cell box bt br");
put("B4", "* 10% Low-Tech Segment Growth Rate =", "rate box bl", 6);
put("I4", "0", "num-cell " + BOX);
put("B5", "", "box bl");
put("I5", "", "box br");
put("B6", "", "box bl");
put("C6", "Last year unit segment demand (High tech) &gt;", "", 5);
put("I6", "0", Y + "num-cell box br");
put("B7", "* 20% High-Tech Segment Growth Rate =", "rate box bl bb", 6);
put("H7", "", "f white box bb");
put("I7", "0", "num-cell " + BOX);

put("K3", "&lt;&lt;&lt;&lt;&lt;&lt;&lt;", "f blue-fill red it box bl bt br");
put("K4", "START", "f blue-fill red it box bl br");
put("K5", "HERE", "f blue-fill red it box bl br");
put("K6", "&lt;&lt;&lt;&lt;&lt;&lt;&lt;", "f blue-fill red it box bl br");
put("K7", "(See F/T  pg  5 &amp; 6)", "f blue-fill s12 low box bl br bb");

put("A10", "<u>Enter Your Product Names &gt;&gt;:</u>", "right s18");
products.forEach(function (c) {
  put(c + 9, "Enter Product Name", "f white center s10 low box bl bt br");
  put(c + 10, c == "C" ? "enter here" : "", Y + "center it box bl br bb");
  put(c + 38, "", Y + BOX);
});

put("A11", 'A) Using the "December Customer Survey" Score:', "f orange");
put("A12", "1) <u>Low-Tech</u> (<i>if applicable to Product</i> ):");
put("A18", "2) <u>High-Tech</u> (<i>if applicable to Product</i> ):");
put("A16", "Projected Low-Tech Unit Demand for Next Year");
put("A22", "Projected High-Tech Unit Demand for Next Year");
[13, 19].forEach(function (r) {
  put("A" + r, "YOUR Product Customer Survey score /");
  put("A" + (r + 1), "Total of ALL Customer Survey scores");
  put("A" + (r + 2), "= Estimated market share for product");
  products.forEach(function (c) {
    put(c + r, c == "C" ? "1" : "", Y + "num-cell");
    put(c + (r + 1), "1", (c == "C" ? Y : "") + "num-cell");
    put(c + (r + 2), c == "C" ? "100.0%" : "0.0%", "num-cell");
    put(c + (r + 3), "0", "num-cell");
  });
});

[24, 35].forEach(function (r) {
  cols.slice(0, 11).forEach(function (c) {
    put(c + r, products.indexOf(c) >= 0 ? "0" : "", "f beige num-cell total s18");
  });
  put("A" + r, "Total Projected Units of Demand (in 000's)", "f beige total s18");
  put("A" + (r + 1), "*".repeat(155), "top", 7);
});

put("A26", 'B) Using "Potential" from the "Market Share" Report:', "f orange");
put("A28", '<u>Fast-Track "Potential" Mkt-Share:</u>');
put("A29", "1) <u>Low-Tech</u> % (<i>if applicable to Product</i> ):");
put("A32", "2) <u>High-Tech %</u> (<i>if applicable to Product</i> ):");
[29, 32].forEach(function (r) {
  put("A" + (r + 1), "= Estimated market demand for your product");
  products.forEach(function (c) {
    put(c + r, c == "C" ? "100.00%" : "", Y + "num-cell");
    put(c + (r + 1), "0", "num-cell");
  });
});

put("A38", "Enter the Sales Forecast you will <u>actually</u> use  &gt;&gt;&gt;&gt;&gt;&gt;", "f orange", 2);
put("A39", "Input these amounts into your Marketing Worksheet", "f orange it s14", 2);
put("A41", '"Things to Do" Support Notes:  This Excel file is posted on our Class Website - it will always be there for your download/use', "f blue-fill un", 7);
["H", "I", "J", "K"].forEach(function (c) {
  put(c + 41, "", "f blue-fill");
});
put("A42", '1) Read about "Sales Forecasting" (pg 13 <u>and</u> pg 22 of your Capsim Guide)', "", 3);
put("A43", '2) Read about "Worst Case, Best Case" planning discussion (pg 23 of your Team Member Guide)', "", 5);
put("A44", '3) Watch the Prof. Zeigler "Sales Forecasting" Video (posted in Modules)', "", 3);
put("A45", '4) Watch the Prof. Zeigler "Worst Case, Best Case" Planning video (posted in Modules)', "", 3);
put("A46", "See me, or our GA team, with questions");
put("L17", "", "active");

// H and J are filled white as spacer columns
for (var r = 3; r <= 71; r++) {
  if (!cells["H" + r]) put("H" + r, "", "f white");
  if (r >= 9 && r <= 38 && !cells["J" + r]) put("J" + r, "", "f white");
}

var html = "<colgroup><col style='width:24px'>";
cols.forEach(function (c, n) {
  html += n == cols.length - 1 ? "<col>" : "<col style='width:" + (colWidths[c] || 54) + "px'>";
});
html += "</colgroup><thead><tr><th></th>";
cols.forEach(function (c, n) {
  html += "<th" + (c == "L" ? " class='cur'" : "") + ">" + (n == cols.length - 1 ? "" : c) + "</th>";
});
html += "</tr></thead><tbody>";
rowHeights.forEach(function (h, n) {
  var row = n + 1;
  html += "<tr" + (h == 10 ? " class='short'" : "") + " style='height:" + h + "px'>";
  html += "<th" + (row == 17 ? " class='cur'" : "") + "><div>" + row + "</div></th>";
  for (var k = 0; k < cols.length; k++) {
    var cell = cells[cols[k] + row];
    if (!cell) {
      html += "<td></td>";
      continue;
    }
    html += "<td class='" + cell[1] + "' colspan='" + cell[2] + "'>" + (cell[0] ? "<div>" + cell[0] + "</div>" : "") + "</td>";
    k += cell[2] - 1;
  }
  html += "</tr>";
});
document.getElementById("grid").innerHTML = html + "</tbody>";
```
